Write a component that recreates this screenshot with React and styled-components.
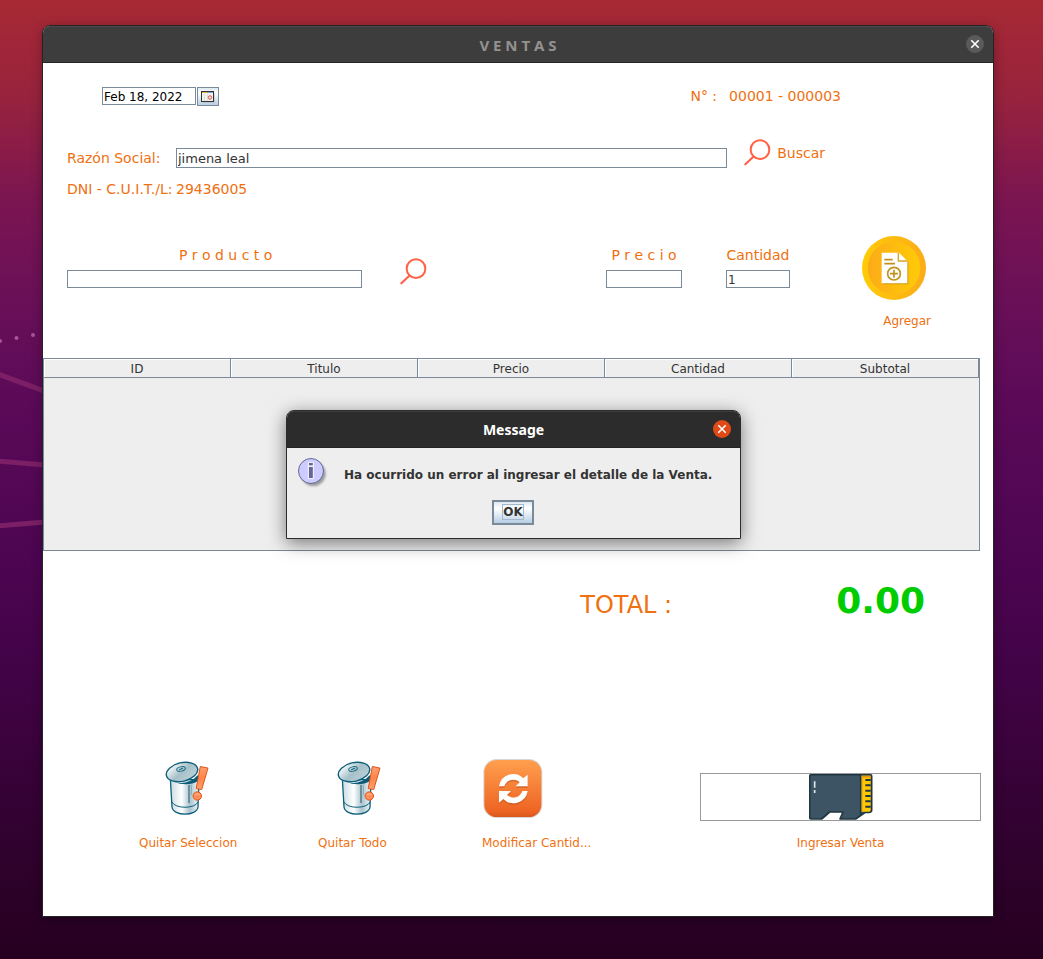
import React from "react";
import styled, { createGlobalStyle } from "styled-components";

const ORANGE = "#f07010";
const STEEL = "#7a8a99";

const GlobalStyle = createGlobalStyle`
  *, *::before, *::after { box-sizing: border-box; }
  body {
    margin: 0;
    font-family: "DejaVu Sans", sans-serif;
    font-size: 14px;
    color: #333;
  }
  button, input {
    font-family: inherit;
    margin: 0;
  }
`;

const Desktop = styled.div`
  position: relative;
  min-height: 100vh;
  padding: 25px 49px 42px 42px;
  display: flex;
  background: linear-gradient(
    #a72934 0%, #98233d 10%, #7b1551 21%, #6a1058 31%, #5b0a58 42%,
    #4d0552 58%, #400344 72%, #330232 85%, #260020 100%
  );
`;

const Wallpaper = styled.svg`
  position: absolute;
  left: 0;
  top: 0;
`;

const Frame = styled.section`
  position: relative;
  flex: 1;
  display: flex;
  flex-direction: column;
  border: 1px solid #262226;
  border-radius: 8px 8px 0 0;
  background: #fff;
  box-shadow: 0 3px 12px rgba(0, 0, 0, 0.3);
`;

const TitleBar = styled.header`
  display: grid;
  grid-template-columns: 18px 1fr 18px;
  align-items: center;
  height: 37px;
  padding: 0 9px;
  border-bottom: 1px solid #262226;
  border-radius: 7px 7px 0 0;
  background: ${(p) => (p.$active ? "#2c2c2c" : "#3d3d3d")};
  box-shadow: inset 0 1px 0 ${(p) => (p.$active ? "#3c3c3c" : "#4a4a4a")};
`;

const Title = styled.h1`
  grid-column: 2;
  margin: 0;
  padding-top: 2px;
  text-align: center;
  font: bold ${(p) => (p.$active ? 14 : 15)}px/18px "Noto Sans", sans-serif;
  white-space: pre;
  color: ${(p) => (p.$active ? "#fff" : "#94928f")};
`;

const CloseButton = styled.button`
  display: block;
  width: 18px;
  height: 18px;
  padding: 0;
  border: 0;
  border-radius: 50%;
  background: ${(p) => (p.$active ? "#e04a17" : "#5a5a5a")};
  svg { display: block; }
`;

const Form = styled.form`
  flex: 1;
  display: flex;
  flex-direction: column;
  padding-top: 24px;
`;

const Field = styled.input`
  display: block;
  width: ${(p) => p.$width || "100%"};
  height: ${(p) => p.$height || 18}px;
  padding: 1px 1px 0;
  border: 1px solid ${STEEL};
  border-radius: 0;
  background: #fff;
  font-size: ${(p) => p.$size || 12}px;
  color: ${(p) => p.$color || "#333"};
  outline: 0;
`;

const Caption = styled.label`
  font-size: 14px;
  line-height: 18px;
  white-space: pre;
  color: ${ORANGE};
`;

const Value = styled.output`
  font-size: 14px;
  line-height: 18px;
  white-space: pre;
  color: ${ORANGE};
`;

const HeadRow = styled.div`
  display: flex;
  justify-content: space-between;
  padding: 0 152px 0 59px;
`;

const DatePicker = styled.div`
  display: flex;
  gap: 1px;
`;

const CalendarButton = styled.button`
  display: grid;
  place-items: center;
  width: 22px;
  height: 19px;
  padding: 0;
  border: 1px solid ${STEEL};
  background: linear-gradient(#dde8f3, #fff 30%, #b8cfe5);
`;

const InvoiceNumber = styled.div`
  display: flex;
  gap: 12px;
`;

const ClientRow = styled.div`
  display: flex;
  gap: 17px;
  margin-top: 33px;
  padding: 0 168px 0 24px;
`;

const ClientGrid = styled.div`
  flex: 1;
  display: grid;
  grid-template-columns: 109px 1fr;
  align-items: center;
  row-gap: 12px;
  padding-top: 9px;
`;

const LinkButton = styled.button`
  align-self: flex-start;
  display: flex;
  align-items: center;
  gap: 6px;
  padding: 0;
  border: 0;
  background: none;
  font-size: 14px;
  line-height: 18px;
  color: ${ORANGE};
  svg { display: block; }
`;

const ProductRow = styled.div`
  display: flex;
  margin-top: 38px;
  padding: 0 62px 0 24px;
`;

const ProductGroup = styled.div`
  flex: 1;
  display: flex;
  align-items: flex-end;
  gap: 38px;
  height: 52px;
  ${LinkButton} {
    align-self: flex-end;
    padding-bottom: 3px;
  }
`;

const Stack = styled.div`
  flex: ${(p) => (p.$grow ? "1" : "none")};
  width: ${(p) => p.$width || "auto"};
  display: flex;
  flex-direction: column;
  gap: 6px;
  ${Caption} { text-align: center; }
`;

const Amounts = styled.div`
  display: flex;
  align-items: flex-end;
  gap: 44px;
  height: 52px;
  margin: 0 72px 0 179px;
`;

const AddButton = styled.button`
  display: flex;
  flex-direction: column;
  align-items: flex-end;
  gap: 12px;
  width: 69px;
  padding: 0;
  border: 0;
  background: none;
  font-size: 12px;
  line-height: 18px;
  color: ${ORANGE};
  svg { display: block; align-self: flex-start; }
`;

const TablePane = styled.div`
  height: 193px;
  margin: 28px 13px 0 0;
  border: 1px solid ${STEEL};
  background: #eee;
`;

const Items = styled.table`
  width: 100%;
  table-layout: fixed;
  border-spacing: 0;
  th {
    height: 19px;
    padding: 2px 0 0;
    border-right: 1px solid ${STEEL};
    border-bottom: 1px solid ${STEEL};
    box-shadow: inset 1px 1px 0 #fff;
    font-size: 12px;
    font-weight: normal;
    line-height: 16px;
  }
`;

const TotalRow = styled.div`
  display: flex;
  justify-content: flex-end;
  align-items: baseline;
  gap: 164px;
  margin-top: 28px;
  padding-right: 68px;
  line-height: 44px;
`;

const TotalLabel = styled.label`
  font-size: 24px;
  color: ${ORANGE};
`;

const TotalValue = styled.output`
  font-size: 36px;
  font-weight: bold;
  color: #00cc00;
`;

const Actions = styled.div`
  display: flex;
  align-items: flex-end;
  margin-top: auto;
  padding: 0 12px 64px 96px;
`;

const ActionList = styled.div`
  flex: 1;
  display: flex;
  align-items: flex-end;
`;

const Action = styled.button`
  display: flex;
  flex-direction: column;
  align-items: flex-start;
  gap: 16px;
  width: ${(p) => p.$width}px;
  padding: 0;
  border: 0;
  background: none;
  font-size: 12px;
  line-height: 18px;
  text-align: left;
  white-space: nowrap;
  color: ${ORANGE};
  svg { display: block; margin-left: ${(p) => p.$indent || 0}px; }
`;

const SaveButton = styled.button`
  display: flex;
  flex-direction: column;
  align-items: center;
  gap: 13px;
  width: 281px;
  padding: 0;
  border: 0;
  background: none;
  font-size: 12px;
  line-height: 18px;
  color: ${ORANGE};
`;

const SaveFrame = styled.span`
  display: flex;
  justify-content: center;
  width: 100%;
  border: 1px solid #999;
  svg { display: block; }
`;

const DialogLayer = styled.div`
  position: absolute;
  inset: 0;
  display: grid;
  place-items: center;
  padding: 6px 9px 0 0;
`;

const Dialog = styled.div`
  width: 455px;
  border: 1px solid #2c2c2c;
  border-radius: 8px 8px 0 0;
  background: #eee;
  box-shadow: 0 4px 18px rgba(0, 0, 0, 0.5);
`;

const DialogBody = styled.div`
  display: flex;
  flex-direction: column;
  align-items: center;
  gap: 12px;
  padding: 8px 10px 13px 9px;
`;

const Message = styled.div`
  display: flex;
  align-items: center;
  gap: 16px;
  width: 100%;
  font-size: 12px;
  font-weight: bold;
  line-height: 18px;
  white-space: nowrap;
  svg { display: block; }
  p { margin: 0; padding-top: 6px; }
`;

const OkButton = styled.button`
  height: 25px;
  padding: 0 8px;
  border: 2px solid ${STEEL};
  background: linear-gradient(#dde8f3, #fff 30%, #b8cfe5);
  font-size: 12px;
  font-weight: bold;
  line-height: 14px;
  color: #333;
  span {
    display: block;
    border: 1px solid #a3b8cc;
  }
`;

const CloseIcon = () => (
  <svg width="18" height="18" viewBox="0 0 18 18" aria-hidden="true">
    <path d="M5.3 5.3 12.7 12.7M12.7 5.3 5.3 12.7" stroke="#fff" strokeWidth="1.6" />
  </svg>
);

const CalendarIcon = () => (
  <svg width="14" height="12" viewBox="0 0 14 12" aria-hidden="true">
    <rect x="1.5" y="1.5" width="12" height="10" fill="#9a9a90" opacity=".6" />
    <rect x=".5" y=".5" width="12" height="10" fill="#f4f2ee" stroke="#333" />
    <path d="M1 1.500h5" stroke="#f0b030" />
    <path d="M6 1.500h6" stroke="#7ba2e0" />
    <path d="M3.500 3v7M6.500 3v7" stroke="#ddd" />
    <circle cx="9" cy="6.500" r="1.700" fill="none" stroke="#e04848" />
  </svg>
);

const SearchIcon = () => (
  <svg width="27" height="27" viewBox="252 388 81 81" fill="none" stroke="#ff6347" aria-hidden="true">
    <circle cx="300" cy="420" r="28" strokeWidth="6" />
    <path d="M280 441 256 464" strokeWidth="6.500" strokeLinecap="round" />
  </svg>
);

const AddIcon = () => (
  <svg width="64" height="64" viewBox="816 48 192 192" aria-hidden="true">
    <defs>
      <linearGradient id="rim"><stop stopColor="#ffcb08" /><stop offset="1" stopColor="#fbab18" /></linearGradient>
      <linearGradient id="disc"><stop stopColor="#fbab18" /><stop offset="1" stopColor="#ffcb08" /></linearGradient>
    </defs>
    <circle cx="912" cy="144" r="96" fill="url(#rim)" />
    <circle cx="912" cy="144" r="79" fill="url(#disc)" />
    <path d="M878 102h50l27 24v67h-77z" fill="#b98a16" opacity=".7" />
    <path d="M875 98h52l25 25v67h-77z" fill="#fff" />
    <path d="M925 98v25h27" fill="none" stroke="#d7a52a" strokeWidth="4" />
    <g fill="none" stroke="#c0921c" strokeWidth="5">
      <path d="M883 119h25M883 131h32M912 149v24M900 161h24" />
      <circle cx="912" cy="161" r="19" />
    </g>
  </svg>
);

const TrashIcon = ({ id }) => (
  <svg width="48" height="60" viewBox="164 758 48 60" aria-hidden="true">
    <defs>
      <linearGradient id={`${id}-can`}>
        <stop stopColor="#c9dbe1" /><stop offset=".4" stopColor="#fff" />
        <stop offset=".68" stopColor="#a9c3cc" /><stop offset="1" stopColor="#f4f9fb" />
      </linearGradient>
      <linearGradient id={`${id}-lid`} x2="1" y2="1">
        <stop offset=".1" stopColor="#fff" /><stop offset=".5" stopColor="#a6c0c8" /><stop offset="1" stopColor="#c4d6dc" />
      </linearGradient>
      <linearGradient id={`${id}-mark`} x2="0" y2="1">
        <stop stopColor="#ffa070" /><stop offset=".5" stopColor="#ff8548" /><stop offset="1" stopColor="#ffa070" />
      </linearGradient>
    </defs>
    <path d="M170.3 778 172 807c1 9.500 25 9.500 26 0l1-27z" fill={`url(#${id}-can)`} stroke="#0d5f7c" strokeWidth="1.300" />
    <path d="M172 802c3 7 23 7 26 0" fill="none" stroke="#0d5f7c" />
    <path d="M174 782q14 4 24-7v6q-10 6-24 1" fill="#0a5a78" />
    <path d="M189 785v18" stroke="#527f90" strokeWidth="1.500" />
    <path d="M191.500 785v10" stroke="#8fb0bb" />
    <ellipse cx="182" cy="772" rx="16" ry="9.300" transform="rotate(-13 182 772)" fill={`url(#${id}-lid)`} stroke="#0d5f7c" strokeWidth="1.400" />
    <ellipse cx="181" cy="769" rx="4.400" ry="2.200" transform="rotate(-15 181 769)" fill="none" stroke="#176984" />
    <path d="m179 770 4-2" stroke="#176984" strokeWidth="1.200" />
    <path d="m200.3 766.5 7.700 1.600-6.300 21.500-5.500-1z" fill={`url(#${id}-mark)`} stroke="#d9571c" />
    <circle cx="197.3" cy="796" r="4.200" fill="#ff8d55" stroke="#d9571c" />
    <path d="M194.8 795q2.500-2.500 5 0" fill="none" stroke="#ffc5a5" />
  </svg>
);

const RefreshIcon = () => (
  <svg width="61" height="61" viewBox="36 50 183 183" aria-hidden="true">
    <defs>
      <linearGradient id="tile" x2="0" y2="1">
        <stop stopColor="#ff9f4e" /><stop offset=".9" stopColor="#ee6423" /><stop offset="1" stopColor="#d9571c" />
      </linearGradient>
    </defs>
    <rect x="40" y="56" width="177" height="177" rx="40" fill="#bbb" opacity=".6" />
    <rect x="43" y="59" width="171" height="171" rx="37" fill="url(#tile)" />
    {[["#a8441a", 5], ["#fff", 0]].map(([fill, dy]) => (
      <g key={fill} fill={fill} opacity={dy ? 0.35 : 1} transform={`translate(0 ${dy})`}>
        <path d="M87 138A43 43 0 0 1 160 114L173 103V138H137L149 126A28 28 0 0 0 103 138Z" />
        <path d="M87 138A43 43 0 0 1 160 114L173 103V138H137L149 126A28 28 0 0 0 103 138Z" transform="rotate(180 130 145)" />
      </g>
    ))}
  </svg>
);

const CardIcon = () => (
  <svg width="64" height="46" viewBox="356 73 192 138" aria-hidden="true">
    <path d="M358 80q0-5 5-5H539q5 0 5 5V181q0 7-8 7H525L496 208H449L458 187H418L394 208H363q-5 0-5-5Z" fill="#3c5463" stroke="#1f3640" strokeWidth="5" strokeLinejoin="round" />
    <path d="M511 75V194" stroke="#1f3640" strokeWidth="5" />
    <path d="M514 78h27v103q0 5-5 5h-22z" fill="#fec902" />
    <path d="M514 78h27v6h-27z" fill="#e8991a" />
    <path d="M514 78h3v108h-3z" fill="#e9a50f" />
    <path d="M525 91h16M525 107h16M525 123h16M525 139h16M525 155h16M525 171h16" stroke="#1f3640" strokeWidth="6" />
    <path d="M373 95v19M373 121v9" stroke="#dfe7ea" strokeWidth="5" />
  </svg>
);

const InfoIcon = () => (
  <svg width="32" height="32" viewBox="48 168 96 96" aria-hidden="true">
    <defs>
      <filter id="soft" x="-20%" y="-20%" width="140%" height="140%"><feGaussianBlur stdDeviation="3" /></filter>
    </defs>
    <circle cx="100" cy="221" r="37" fill="#777" opacity=".7" filter="url(#soft)" />
    <circle cx="93" cy="213" r="37.500" fill="#ccccff" stroke="#666699" strokeWidth="3" />
    <path d="M85 187h15v11H85zM85 199h15v37H85z" fill="#666699" stroke="#fff" strokeWidth="3" />
  </svg>
);

const columns = ["ID", "Titulo", "Precio", "Cantidad", "Subtotal"];

export default function App() {
  return (
    <Desktop>
      <GlobalStyle />
      <Wallpaper width="42" height="600" aria-hidden="true">
        <g fill="#a8559a">
          <circle cx="0" cy="341" r="2" />
          <circle cx="16.500" cy="338" r="2" />
          <circle cx="33" cy="335" r="2" />
        </g>
        <path d="M-2 374 44 391M-2 461 44 465M-2 526 44 522" stroke="#7c1f66" strokeWidth="5" />
      </Wallpaper>
      <Frame>
        <TitleBar>
          <Title>V E N T A S</Title>
          <CloseButton type="button" aria-label="Cerrar"><CloseIcon /></CloseButton>
        </TitleBar>
        <Form onSubmit={(e) => e.preventDefault()}>
          <HeadRow>
            <DatePicker>
              <Field $width="94px" $color="#000" defaultValue="Feb 18, 2022" aria-label="Fecha" />
              <CalendarButton type="button" aria-label="Calendario"><CalendarIcon /></CalendarButton>
            </DatePicker>
            <InvoiceNumber>
              <Caption htmlFor="numero">N° :</Caption>
              <Value id="numero">00001 - 000003</Value>
            </InvoiceNumber>
          </HeadRow>

          <ClientRow>
            <ClientGrid>
              <Caption htmlFor="razon">Razón Social:</Caption>
              <Field id="razon" $height={20} $size={13} defaultValue="jimena leal" />
              <Caption htmlFor="dni">DNI - C.U.I.T./L:</Caption>
              <Value id="dni">29436005</Value>
            </ClientGrid>
            <LinkButton type="button"><SearchIcon />Buscar</LinkButton>
          </ClientRow>

          <ProductRow>
            <ProductGroup>
              <Stack $grow>
                <Caption htmlFor="producto">{"     P r o d u c t o"}</Caption>
                <Field id="producto" />
              </Stack>
              <LinkButton type="button" aria-label="Buscar producto"><SearchIcon /></LinkButton>
            </ProductGroup>
            <Amounts>
              <Stack $width="76px">
                <Caption htmlFor="precio">P r e c i o</Caption>
                <Field id="precio" />
              </Stack>
              <Stack $width="64px">
                <Caption htmlFor="cantidad">Cantidad</Caption>
                <Field id="cantidad" defaultValue="1" />
              </Stack>
            </Amounts>
            <AddButton type="button"><AddIcon />Agregar</AddButton>
          </ProductRow>

          <TablePane>
            <Items>
              <thead>
                <tr>{columns.map((c) => <th key={c} scope="col">{c}</th>)}</tr>
              </thead>
              <tbody />
            </Items>
          </TablePane>

          <TotalRow>
            <TotalLabel htmlFor="total">TOTAL :</TotalLabel>
            <TotalValue id="total">0.00</TotalValue>
          </TotalRow>

          <Actions>
            <ActionList>
              <Action type="button" $width={179} $indent={25}><TrashIcon id="one" />Quitar Seleccion</Action>
              <Action type="button" $width={164} $indent={18}><TrashIcon id="all" />Quitar Todo</Action>
              <Action type="button" $width={112}><RefreshIcon />Modificar Cantid...</Action>
            </ActionList>
            <SaveButton type="submit">
              <SaveFrame><CardIcon /></SaveFrame>
              Ingresar Venta
            </SaveButton>
          </Actions>
        </Form>
        <DialogLayer>
          <Dialog role="dialog" aria-labelledby="dialog-title">
            <TitleBar $active>
              <Title as="h2" id="dialog-title" $active>Message</Title>
              <CloseButton type="button" aria-label="Cerrar mensaje" $active><CloseIcon /></CloseButton>
            </TitleBar>
            <DialogBody>
              <Message>
                <InfoIcon />
                <p>Ha ocurrido un error al ingresar el detalle de la Venta.</p>
              </Message>
              <OkButton type="button"><span>OK</span></OkButton>
            </DialogBody>
          </Dialog>
        </DialogLayer>
      </Frame>
    </Desktop>
  );
}
